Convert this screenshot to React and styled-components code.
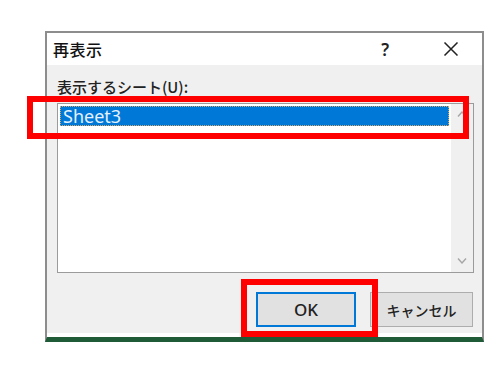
import React from "react";
import styled, { createGlobalStyle } from "styled-components";

const GlobalStyle = createGlobalStyle`
	html, body {
		margin: 0;
		padding: 0;
		background: #ffffff;
	}
	body {
		font-family: "Noto Sans", "Noto Sans CJK JP", sans-serif;
	}
`;

const Page = styled.div`
	position: relative;
	width: 502px;
	height: 372px;
	box-sizing: border-box;
	padding: 31px 0 0 45px;
	overflow: hidden;
`;

const Dialog = styled.div`
	width: 439px;
	box-sizing: border-box;
	border: 2px solid #8d8d8d;
	border-bottom: 5px solid #1f5b37;
	background: #ffffff;
	display: flex;
	flex-direction: column;
`;

const TitleBar = styled.div`
	height: 32px;
	display: flex;
	align-items: center;
	padding: 0 0 0 6px;
	background: #ffffff;
`;

const Title = styled.span`
	flex: 1;
	font-family: "Noto Sans CJK JP", sans-serif;
	font-size: 16px;
	font-weight: 500;
	color: #111;
	letter-spacing: 0.5px;
`;

const HelpMark = styled.span`
	font-family: "Noto Sans", sans-serif;
	font-size: 17px;
	font-weight: 600;
	color: #222;
	margin-right: 54px;
`;

const CloseBox = styled.span`
	width: 16px;
	height: 14px;
	display: flex;
	margin-right: 23px;
`;

const Body = styled.div`
	background: #f0f0f0;
	padding: 12px 8px 6px 10px;
	display: flex;
	flex-direction: column;
	border-bottom: 4px solid #ffffff;
`;

const Label = styled.div`
	font-family: "Noto Sans CJK JP", sans-serif;
	font-size: 15px;
	font-weight: 500;
	line-height: 20px;
	color: #222;
	margin-bottom: 6px;
`;

const ListBox = styled.div`
	height: 170px;
	box-sizing: border-box;
	border: 1px solid #9b9b9b;
	background: #ffffff;
	display: flex;
`;

const ListArea = styled.div`
	flex: 1;
	padding: 2px;
`;

const ListItem = styled.div`
	height: 20px;
	box-sizing: border-box;
	display: flex;
	align-items: center;
	padding-left: 2px;
	font-family: "Noto Sans", sans-serif;
	font-size: 18px;
	color: ${(p) => (p.$selected ? "#e6f1ff" : "#000")};
	background: ${(p) => (p.$selected ? "#0078d7" : "transparent")};
	border: 1px dotted ${(p) => (p.$selected ? "#d3a66a" : "transparent")};
`;

const ScrollBar = styled.div`
	width: 22px;
	background: #f0f0f0;
	display: flex;
	flex-direction: column;
	justify-content: space-between;
	align-items: center;
	padding: 7px 0 8px;
`;

const ButtonRow = styled.div`
	display: flex;
	justify-content: flex-end;
	gap: 14px;
	margin-top: 19px;
	padding-right: 1px;
`;

const Button = styled.button`
	width: ${(p) => p.$w}px;
	height: 35px;
	box-sizing: border-box;
	background: #e1e1e1;
	border: ${(p) => (p.$default ? "2px solid #0078d7" : "1px solid #adadad")};
	font-family: "Noto Sans", "Noto Sans CJK JP", sans-serif;
	font-size: ${(p) => p.$fs}px;
	font-weight: 500;
	color: #222;
	padding: 0;
`;

const Highlight = styled.div`
	position: absolute;
	box-sizing: border-box;
	border: 6px solid #ff0000;
	left: ${(p) => p.$x}px;
	top: ${(p) => p.$y}px;
	width: ${(p) => p.$w}px;
	height: ${(p) => p.$h}px;
	pointer-events: none;
`;

function Chevron({ up }) {
	return (
		<svg width="10" height="6" viewBox="0 0 10 6">
			<path
				d={up ? "M1 5.5 L5 1 L9 5.5" : "M1 0.5 L5 5 L9 0.5"}
				fill="none"
				stroke="#a6a6a6"
				strokeWidth="1.4"
			/>
		</svg>
	);
}

export default function App() {
	return (
		<Page>
			<GlobalStyle />
			<Dialog>
				<TitleBar>
					<Title>再表示</Title>
					<HelpMark>?</HelpMark>
					<CloseBox>
						<svg width="16" height="14" viewBox="0 0 16 14">
							<path
								d="M1.5 0.5 L14.5 13.5 M14.5 0.5 L1.5 13.5"
								stroke="#222"
								strokeWidth="1.5"
							/>
						</svg>
					</CloseBox>
				</TitleBar>
				<Body>
					<Label>表示するシート(U):</Label>
					<ListBox>
						<ListArea>
							<ListItem $selected>Sheet3</ListItem>
						</ListArea>
						<ScrollBar>
							<Chevron up />
							<Chevron />
						</ScrollBar>
					</ListBox>
					<ButtonRow>
						<Button $w={100} $fs={17} $default>
							OK
						</Button>
						<Button $w={103} $fs={14}>
							キャンセル
						</Button>
					</ButtonRow>
				</Body>
			</Dialog>
			<Highlight $x={27} $y={96} $w={442} $h={43} />
			<Highlight $x={241} $y={279} $w={137} $h={58} />
		</Page>
	);
}
